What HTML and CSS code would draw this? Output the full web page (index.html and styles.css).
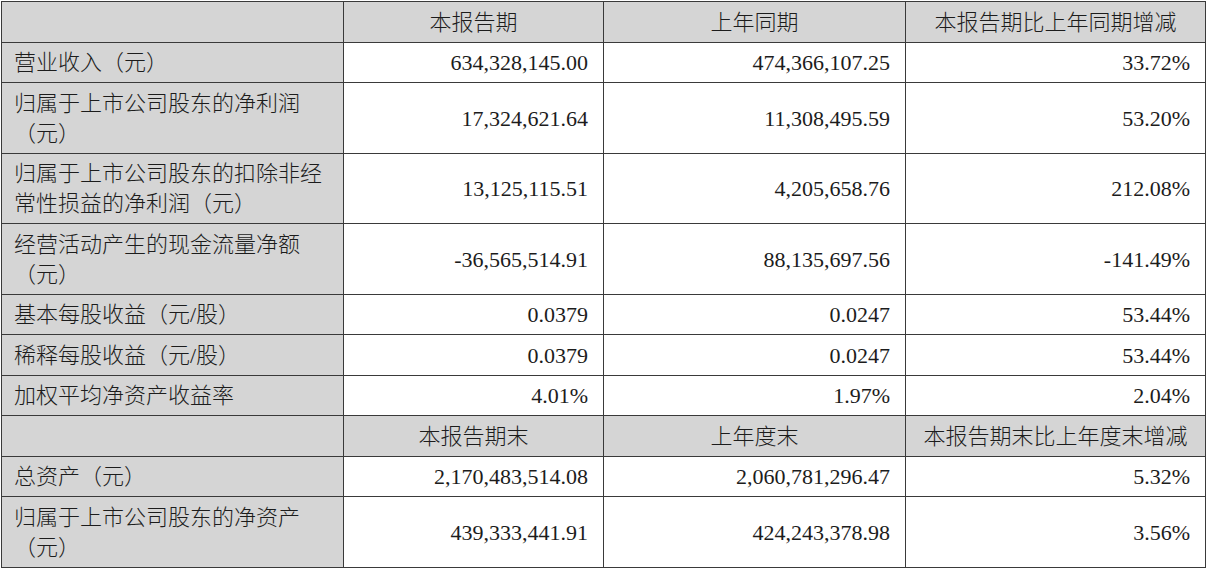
FILE: index.html
```html
<!DOCTYPE html>
<html lang="zh-CN">
<head>
<meta charset="utf-8">
<title>主要会计数据和财务指标</title>
<link rel="stylesheet" href="styles.css">
</head>
<body>
<table class="fin-table">
  <colgroup>
    <col class="c1"><col class="c2"><col class="c3"><col class="c4">
  </colgroup>
  <tbody>
    <tr class="head-row">
      <td></td>
      <td>本报告期</td>
      <td>上年同期</td>
      <td>本报告期比上年同期增减</td>
    </tr>
    <tr>
      <td class="lbl">营业收入（元）</td>
      <td class="num">634,328,145.00</td>
      <td class="num">474,366,107.25</td>
      <td class="num">33.72%</td>
    </tr>
    <tr>
      <td class="lbl">归属于上市公司股东的净利润（元）</td>
      <td class="num">17,324,621.64</td>
      <td class="num">11,308,495.59</td>
      <td class="num">53.20%</td>
    </tr>
    <tr>
      <td class="lbl">归属于上市公司股东的扣除非经常性损益的净利润（元）</td>
      <td class="num">13,125,115.51</td>
      <td class="num">4,205,658.76</td>
      <td class="num">212.08%</td>
    </tr>
    <tr>
      <td class="lbl">经营活动产生的现金流量净额（元）</td>
      <td class="num">-36,565,514.91</td>
      <td class="num">88,135,697.56</td>
      <td class="num">-141.49%</td>
    </tr>
    <tr>
      <td class="lbl">基本每股收益（元/股）</td>
      <td class="num">0.0379</td>
      <td class="num">0.0247</td>
      <td class="num">53.44%</td>
    </tr>
    <tr>
      <td class="lbl">稀释每股收益（元/股）</td>
      <td class="num">0.0379</td>
      <td class="num">0.0247</td>
      <td class="num">53.44%</td>
    </tr>
    <tr>
      <td class="lbl">加权平均净资产收益率</td>
      <td class="num">4.01%</td>
      <td class="num">1.97%</td>
      <td class="num">2.04%</td>
    </tr>
    <tr class="head-row">
      <td></td>
      <td>本报告期末</td>
      <td>上年度末</td>
      <td>本报告期末比上年度末增减</td>
    </tr>
    <tr>
      <td class="lbl">总资产（元）</td>
      <td class="num">2,170,483,514.08</td>
      <td class="num">2,060,781,296.47</td>
      <td class="num">5.32%</td>
    </tr>
    <tr>
      <td class="lbl">归属于上市公司股东的净资产（元）</td>
      <td class="num">439,333,441.91</td>
      <td class="num">424,243,378.98</td>
      <td class="num">3.56%</td>
    </tr>
  </tbody>
</table>
</body>
</html>
```

FILE: styles.css
```css
html, body {
  margin: 0;
  padding: 0;
  background: #ffffff;
}

body {
  padding: 1px 0 0 1px;
  font-family: "Liberation Serif", "Noto Sans CJK SC", serif;
  font-size: 22px;
  color: #1c1c1c;
}

.fin-table {
  border-collapse: collapse;
  table-layout: fixed;
  width: 1204px;
}

.c1 { width: 342px; }
.c2 { width: 260px; }
.c3 { width: 302px; }
.c4 { width: 300px; }

.fin-table td {
  border: 1px solid #3a3a3a;
  line-height: 30px;
  padding: 5.5px 15px 4px 12px;
  vertical-align: middle;
  white-space: normal;
}

.head-row td {
  background: #d5d5d5;
  text-align: center;
  padding-left: 6px;
  padding-right: 6px;
  font-weight: 300;
}

.fin-table td.lbl {
  background: #d5d5d5;
  text-align: left;
  font-weight: 300;
}

.fin-table td.num {
  text-align: right;
}
```
